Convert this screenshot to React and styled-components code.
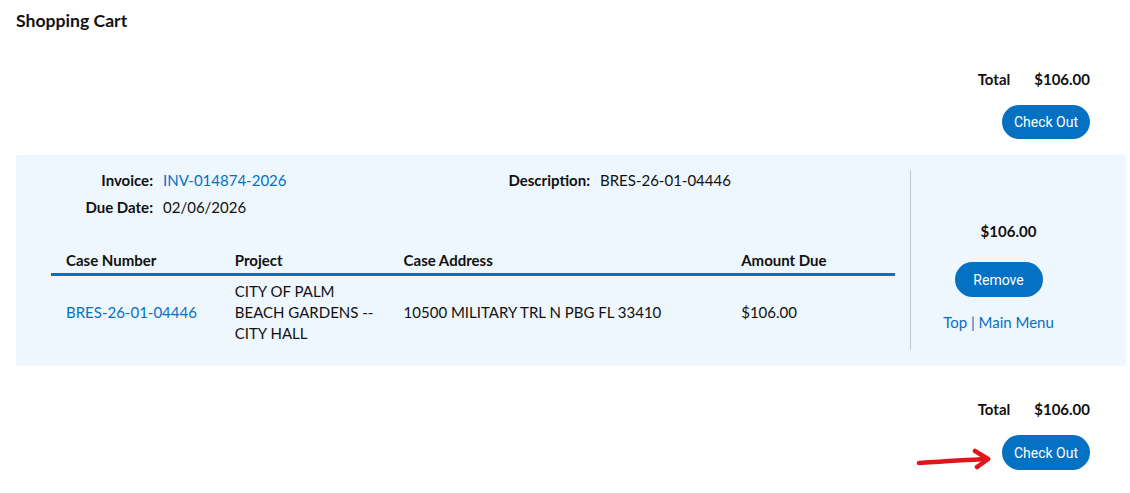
import React from "react";
import styled, { createGlobalStyle } from "styled-components";

const Global = createGlobalStyle`
  html, body { margin: 0; padding: 0; background: #fff; }
  body { font-family: Lato, "Open Sans", Arial, sans-serif; color: #111; font-size: 15px; }
  * { box-sizing: border-box; }
`;

const BLUE = "#0571c3";

const Page = styled.div`
  padding: 10px 4px 0 16px;
`;

const Title = styled.h1`
  margin: 0;
  font-size: 17.6px;
  line-height: 22px;
  font-weight: 700;
`;

const Summary = styled.div`
  display: flex;
  flex-direction: column;
  align-items: flex-end;
  gap: 15px;
  padding-right: 36px;
  margin-top: ${(p) => p.$top}px;
`;

const TotalRow = styled.div`
  display: flex;
  gap: 24px;
  font-weight: 700;
  font-size: 15px;
  line-height: 21px;
`;

const ButtonWrap = styled.div`
  position: relative;
  display: flex;
`;

const Button = styled.button`
  font-family: Roboto, Arial, sans-serif;
  font-size: 14px;
  color: #fff;
  background: ${BLUE};
  border: none;
  border-radius: 18px;
  height: ${(p) => p.$h || 34}px;
  min-width: 88px;
  padding: 0 12px;
  cursor: pointer;
`;

const Arrow = styled.svg`
  position: absolute;
  right: calc(100% + 10px);
  top: 13px;
`;

const Panel = styled.section`
  display: flex;
  background: #eef6fe;
  border-radius: 2px;
  margin: 16px 0 0 0;
  padding: 15px 40px 16px 0;
`;

const Main = styled.div`
  width: 894px;
  padding: 0 15px 0 35px;
`;

const Info = styled.div`
  display: grid;
  grid-template-columns: 102px 315px 102px 1fr;
  column-gap: 10px;
  row-gap: 6px;
  line-height: 21px;
`;

const Label = styled.div`
  text-align: right;
  font-weight: 700;
`;

const Value = styled.div``;

const Link = styled.a`
  color: ${BLUE};
  text-decoration: none;
  cursor: pointer;
`;

const Table = styled.table`
  width: 100%;
  border-collapse: collapse;
  margin-top: 32px;
  table-layout: fixed;
  line-height: 21px;
`;

const Th = styled.th`
  text-align: left;
  font-weight: 700;
  padding: 0 15px 2px;
  border-bottom: 3px solid ${BLUE};
  width: ${(p) => p.$w};
`;

const Td = styled.td`
  padding: 5px 15px 6px;
  vertical-align: middle;
`;

const Side = styled.div`
  flex: 1;
  border-left: 1px solid #c4c8cc;
  display: flex;
  flex-direction: column;
  align-items: center;
  padding-top: 51px;
  line-height: 21px;
`;

const Amount = styled.div`
  font-weight: 700;
  margin: 0 0 20px 20px;
`;

const NavLinks = styled.div`
  margin-top: 15px;
  color: ${BLUE};
`;

const RedArrow = () => (
  <Arrow width="78" height="22" viewBox="0 0 78 22" fill="none">
    <path d="M5 15 C 27 13.5, 50 12, 74 11" stroke="#e3141c" strokeWidth="4.6" strokeLinecap="round" />
    <path d="M61 3 C 66 6, 70 8.5, 74 11 C 70 14, 66 17, 63 19" stroke="#e3141c" strokeWidth="4.6" strokeLinecap="round" strokeLinejoin="round" />
  </Arrow>
);

export default function App() {
  return (
    <>
      <Global />
      <Page>
        <Title>Shopping Cart</Title>
        <Summary $top={37}>
          <TotalRow>
            <span>Total</span>
            <span>$106.00</span>
          </TotalRow>
          <ButtonWrap>
            <Button>Check Out</Button>
          </ButtonWrap>
        </Summary>

        <Panel>
          <Main>
            <Info>
              <Label>Invoice:</Label>
              <Value><Link>INV-014874-2026</Link></Value>
              <Label>Description:</Label>
              <Value>BRES-26-01-04446</Value>
              <Label>Due Date:</Label>
              <Value>02/06/2026</Value>
            </Info>
            <Table>
              <thead>
                <tr>
                  <Th $w="20%">Case Number</Th>
                  <Th $w="20%">Project</Th>
                  <Th $w="40%">Case Address</Th>
                  <Th $w="20%">Amount Due</Th>
                </tr>
              </thead>
              <tbody>
                <tr>
                  <Td><Link>BRES-26-01-04446</Link></Td>
                  <Td>CITY OF PALM BEACH GARDENS -- CITY HALL</Td>
                  <Td>10500 MILITARY TRL N PBG FL 33410</Td>
                  <Td>$106.00</Td>
                </tr>
              </tbody>
            </Table>
          </Main>
          <Side>
            <Amount>$106.00</Amount>
            <Button $h={35}>Remove</Button>
            <NavLinks>
              <Link>Top</Link> | <Link>Main Menu</Link>
            </NavLinks>
          </Side>
        </Panel>

        <Summary $top={33}>
          <TotalRow>
            <span>Total</span>
            <span>$106.00</span>
          </TotalRow>
          <ButtonWrap>
            <RedArrow />
            <Button $h={35}>Check Out</Button>
          </ButtonWrap>
        </Summary>
      </Page>
    </>
  );
}
